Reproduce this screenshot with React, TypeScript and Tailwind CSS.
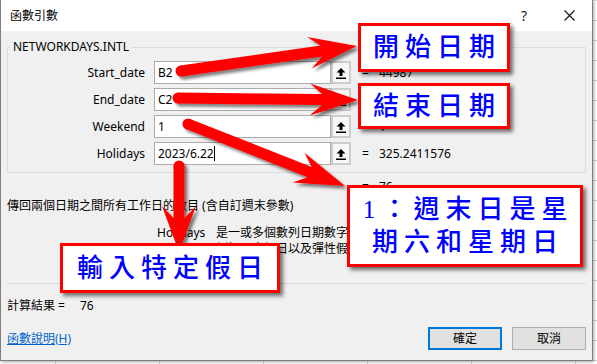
const uiFont = "font-['Noto_Sans','Noto_Sans_CJK_TC',sans-serif]";
const noteFont = "font-['Liberation_Serif','Noto_Sans_CJK_TC',serif]";

type Pt = [number, number];

// red callout arrow: rounded tail, swept head
const arrowPoints = (t: Pt, p: Pt, w: number, len: number, half: number, notch: number) => {
  const dx = p[0] - t[0];
  const dy = p[1] - t[1];
  const d = Math.hypot(dx, dy);
  const ux = dx / d;
  const uy = dy / d;
  const vx = -uy;
  const vy = ux;
  const jx = p[0] - ux * (len - notch);
  const jy = p[1] - uy * (len - notch);
  const cx = p[0] - ux * len;
  const cy = p[1] - uy * len;
  const pts: Pt[] = [
    [t[0] + vx * w, t[1] + vy * w],
    [jx + vx * w, jy + vy * w],
    [cx + vx * half, cy + vy * half],
    [p[0], p[1]],
    [cx - vx * half, cy - vy * half],
    [jx - vx * w, jy - vy * w],
    [t[0] - vx * w, t[1] - vy * w],
  ];
  return pts.map((q) => q.map((n) => n.toFixed(1)).join(",")).join(" ");
};

const arrows: { t: Pt; p: Pt; len: number; half: number }[] = [
  { t: [181, 71], p: [357, 46], len: 48, half: 16 },
  { t: [178, 98], p: [358, 100], len: 48, half: 16 },
  { t: [188, 124], p: [345, 186], len: 50, half: 16 },
  { t: [179, 166], p: [179, 252], len: 46, half: 17 },
];

const rows = [
  { label: "Start_date", value: "B2", result: "44987" },
  { label: "End_date", value: "C2", result: "45016" },
  { label: "Weekend", value: "1", result: "1" },
  { label: "Holidays", value: "2023/6.22", result: "325.2411576", caret: true },
];

const RefButton = () => (
  <div className="w-[20px] h-[23px] border-2 border-[#cccccc] bg-[#f7f7f7] flex items-center justify-center">
    <svg width="10" height="12" viewBox="0 0 10 12">
      <path d="M5 1 L9.5 5.5 H6.5 V9 H3.5 V5.5 H0.5 Z" fill="#000" />
      <rect x="0" y="10.5" width="10" height="1.5" fill="#000" />
    </svg>
  </div>
);

const Callout = ({ className, children }: { className: string; children: React.ReactNode }) => (
  <div
    className={`absolute border-[3px] border-[#ff0000] bg-white shadow-[3px_3px_4px_rgba(0,0,0,0.55)] flex flex-col items-center justify-center text-[26px] leading-[33px] tracking-[6px] font-medium text-[#0000ff] ${noteFont} ${className}`}
  >
    {children}
  </div>
);

export default function App() {
  return (
    <div className="relative w-[597px] h-[364px] overflow-hidden bg-white bg-[linear-gradient(to_right,#d4d4d4_1px,transparent_1px),linear-gradient(to_bottom,#d4d4d4_1px,transparent_1px)] bg-[length:104px_20px] bg-[position:55px_0px]">
      {/* dialog */}
      <div className={`w-[593px] h-[361px] flex flex-col border-x border-b border-[#7f7f7f] shadow-[1px_1px_3px_rgba(0,0,0,0.35)] text-[12px] text-black ${uiFont}`}>
        <div className="h-[31px] shrink-0 bg-white flex items-center pl-[9px] pr-[17px]">
          <span className="text-[12px]">函數引數</span>
          <span className="ml-auto text-[14px] text-[#222]">?</span>
          <svg className="ml-[37px]" width="11" height="11" viewBox="0 0 11 11">
            <path d="M0.5 0.5 L10.5 10.5 M10.5 0.5 L0.5 10.5" stroke="#111" strokeWidth="1.1" />
          </svg>
        </div>

        <div className="flex-1 bg-[#f0f0f0] px-[6px] flex flex-col">
          <fieldset className="mt-[8px] h-[134px] border border-[#dcdcdc] pl-0 pt-[6px]">
            <legend className="ml-[2px] px-[3px] text-[12px] leading-[16px]">NETWORKDAYS.INTL</legend>
            <div className="flex flex-col gap-[4px]">
              {rows.map((r) => (
                <div key={r.label} className="flex items-center h-[23px]">
                  <div className="w-[137px] text-right">{r.label}</div>
                  <div className="ml-[9px] w-[177px] h-[23px] bg-white border border-[#ababab] flex items-center pl-[3px]">
                    <span>{r.value}</span>
                    {r.caret && <span className="w-px h-[15px] bg-black" />}
                  </div>
                  <RefButton />
                  <span className="ml-[11px] w-[17px]">=</span>
                  <span>{r.result}</span>
                </div>
              ))}
            </div>
          </fieldset>

          <div className="mt-[6px] leading-[16px] pl-[355px] flex">
            <span className="w-[17px]">=</span>
            <span>76</span>
          </div>

          <div className="mt-[3px] leading-[16px]">傳回兩個日期之間所有工作日的數目 (含自訂週末參數)</div>

          <div className="mt-[11px] pl-[150px] flex leading-[16px]">
            <span className="w-[59px]">Holidays</span>
            <div className="flex flex-col whitespace-nowrap">
              <span>是一或多個數列日期數字，代表要從工作日行事曆中排除的日期</span>
              <span>例如國定假日以及彈性假日</span>
            </div>
          </div>

          <div className="mt-[26px] h-px bg-[#d9d9d9]" />

          <div className="mt-[14px] leading-[16px] flex">
            <span>計算結果 =</span>
            <span className="ml-[15px]">76</span>
          </div>

          <div className="mt-[13px] flex items-center">
            <a href="#" className="text-[#0066cc] underline">函數說明(H)</a>
            <div className="ml-auto flex gap-[10px]">
              <button className="w-[74px] h-[23px] border-2 border-[#0078d7] bg-[#e1e1e1]">確定</button>
              <button className="w-[74px] h-[23px] border border-[#adadad] bg-[#e1e1e1]">取消</button>
            </div>
          </div>
        </div>
      </div>

      {/* annotation arrows */}
      <svg className="absolute inset-0 pointer-events-none" width="597" height="364" viewBox="0 0 597 364">
        <defs>
          <filter id="sh" x="-20%" y="-20%" width="140%" height="140%">
            <feDropShadow dx="3" dy="3" stdDeviation="1.8" floodColor="#000" floodOpacity="0.5" />
          </filter>
        </defs>
        {arrows.map((a, i) => (
          <g key={i} filter="url(#sh)" fill="#ff0000">
            <polygon points={arrowPoints(a.t, a.p, 5.5, a.len, a.half, 12)} />
            <circle cx={a.t[0]} cy={a.t[1]} r="5.5" />
          </g>
        ))}
      </svg>

      {/* callout boxes */}
      <Callout className="left-[358px] top-[23px] w-[152px] h-[49px] pl-[6px]">開始日期</Callout>
      <Callout className="left-[358px] top-[83px] w-[152px] h-[46px] pl-[6px]">結束日期</Callout>
      <Callout className="left-[347px] top-[185px] w-[236px] h-[82px] pl-[6px]">
        <span>1：週末日是星</span>
        <span>期六和星期日</span>
      </Callout>
      <Callout className="left-[60px] top-[243px] w-[220px] h-[50px] pl-[6px]">輸入特定假日</Callout>
    </div>
  );
}
